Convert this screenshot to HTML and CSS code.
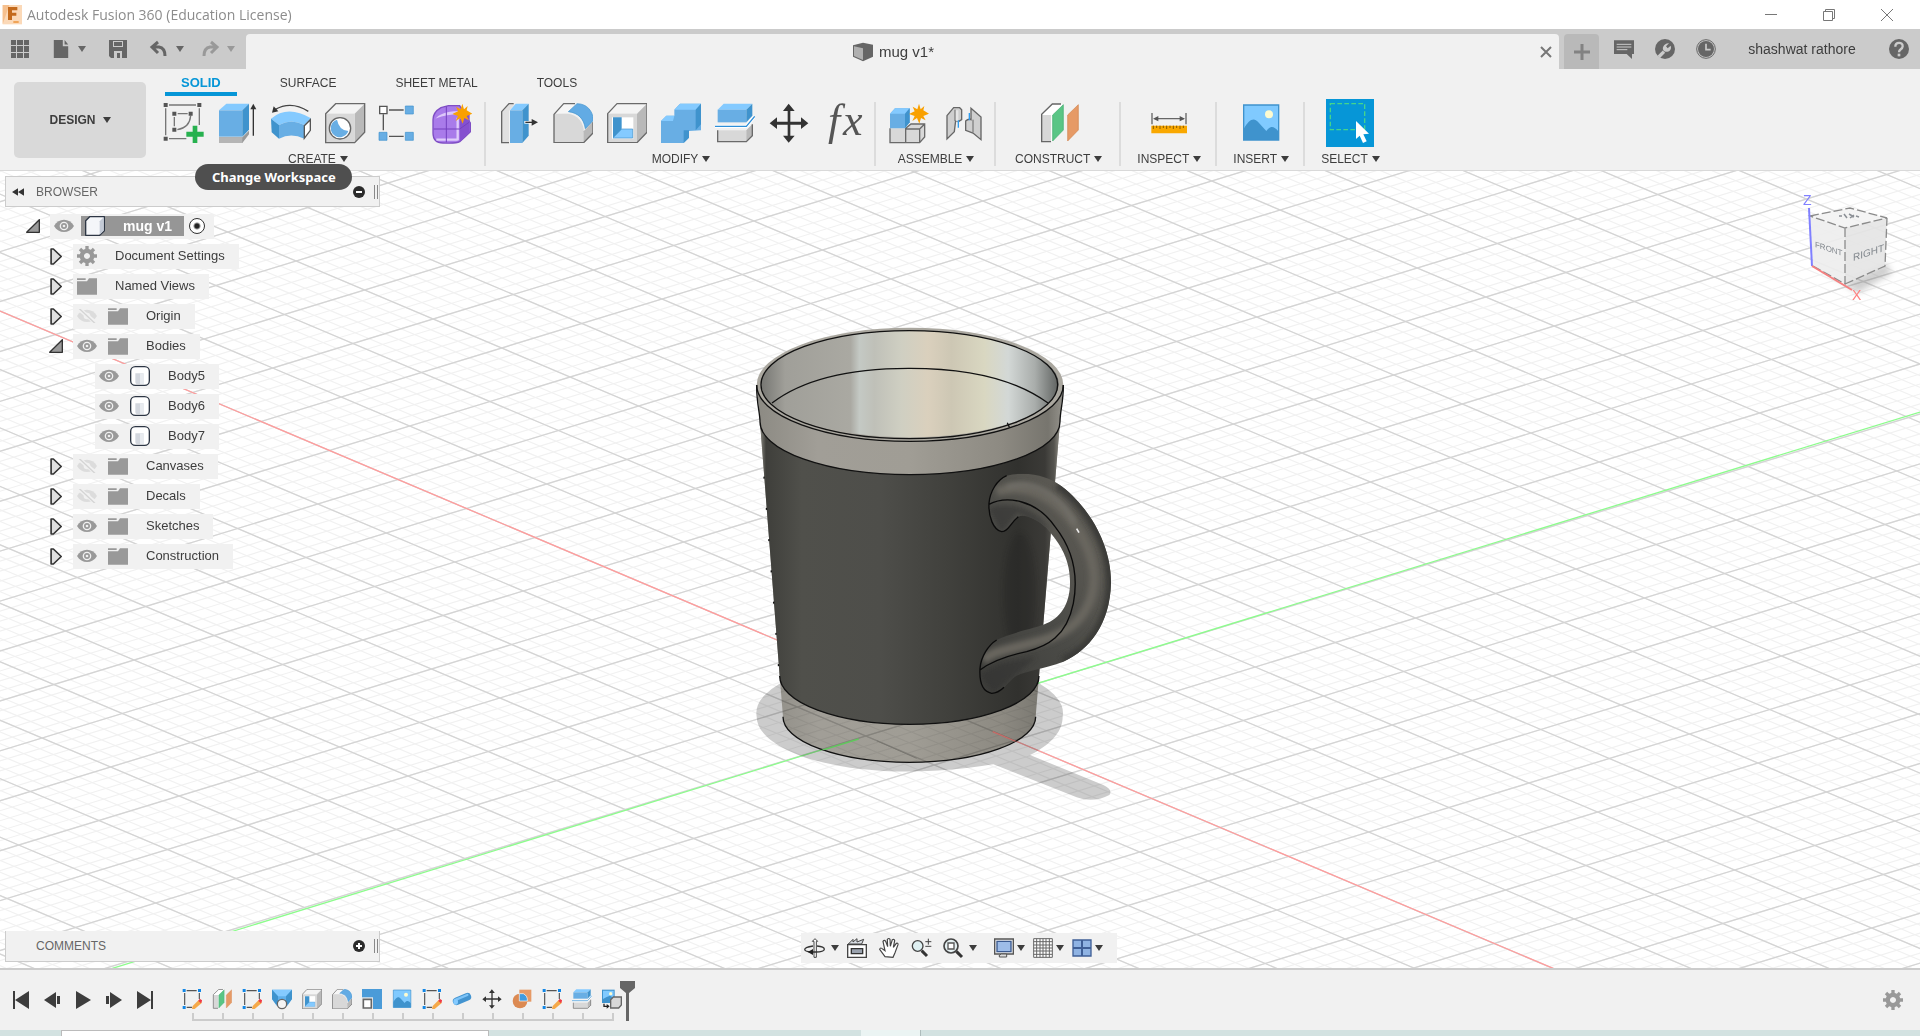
FILE: index.html
```html
<!DOCTYPE html>
<html lang="en">
<head>
<meta charset="utf-8">
<title>Autodesk Fusion 360 (Education License)</title>
<link rel="stylesheet" href="styles.css">
</head>
<body>
<svg class="defs" aria-hidden="true">
  <defs>
    <symbol id="plane" viewBox="0 0 120 120">
      <path d="M8 38 40 3 70 3 70 6 38 38V114H8z" fill="#fff"/><path d="M8 36h28v80H8z" fill="#d8d8d8"/>
      <path d="M36 116H8V34L40 3h26" fill="none" stroke="#666" stroke-width="4"/>
      <path d="M41 36 73 5V81L41 114z" fill="#5ac585" stroke="#3cae6c" stroke-width="2"/>
      <path d="M86 36 118 5V81L86 114z" fill="#e69a66" stroke="#d2834c" stroke-width="2"/>
    </symbol>
    <symbol id="shell" viewBox="0 0 120 120">
      <path d="M2 32 30 2h90L90 32z" fill="#f4f4f4"/><path d="M90 32 120 2V88L90 119z" fill="#b9b9b9"/><path d="M2 32h88v87H2z" fill="#d8d8d8"/>
      <path d="M2 32 30 2h90V88L90 119H2z" fill="none" stroke="#6a6a6a" stroke-width="4" stroke-linejoin="round"/>
      <path d="M15 43h64v64H15z" fill="#fff"/><path d="M18 43v62l26-24V43z" fill="#3f93cd"/><path d="M18 105 44 78h33v27z" fill="#84caff" stroke="#3f93cd" stroke-width="2"/>
    </symbol>
    <symbol id="fillet" viewBox="0 0 120 120">
      <path d="M3 34 32 2h34L46 30z" fill="#f6f6f6"/><path d="M3 32h42c30 4 46 26 48 54v33H3z" fill="#d8d8d8"/><path d="M92 85 120 55V90L92 119z" fill="#b9b9b9"/>
      <path d="M120 58V90L92 119H3V34L32 2h34" fill="none" stroke="#6a6a6a" stroke-width="4" stroke-linejoin="round"/>
      <path d="M46 26 72 2c28 0 48 20 49 50L97 77C92 46 76 30 46 26z" fill="#62abe4" stroke="#3f93cd" stroke-width="2"/>
    </symbol>
    <symbol id="split" viewBox="0 0 120 120">
      <path d="M8 20 26 2h86L94 20z" fill="#84caff"/><path d="M8 20h86v38H8z" fill="#68aee4"/><path d="M94 20 112 2V38L94 58z" fill="#3f93cd"/>
      <path d="M8 82h86v34H8z" fill="#d8d8d8"/><path d="M94 82 112 64V98L94 116z" fill="#b9b9b9"/><path d="M8 82V116H94L112 98V64" fill="none" stroke="#6a6a6a" stroke-width="4"/>
      <path d="M0 70H94L119 40" fill="none" stroke="#fff" stroke-width="10"/><path d="M0 70H94L119 40" fill="none" stroke="#2f8fd8" stroke-width="4"/>
    </symbol>
    <symbol id="picture" viewBox="0 0 120 120">
      <path d="M8 6h105v105H8z" fill="#80caff"/><path d="M8 78C26 46 40 42 54 60L76 84C88 68 98 68 113 86v25H8z" fill="#3f93cd"/>
      <circle cx="84" cy="34" r="12" fill="#fdfbd0"/><path d="M8 6h105v105H8z" fill="none" stroke="#3f93cd" stroke-width="4"/>
    </symbol>
    <symbol id="move" viewBox="0 0 120 120">
      <path d="M56 56V24H42L59 2 77 24H64V56H96V43L118 61 96 78V65H64V98H77L59 119 42 98H56V65H24V78L2 61 24 43V56z" fill="#333"/>
    </symbol>
    <symbol id="feat-sketch" viewBox="0 0 60 60">
      <path d="M8 12V48M14 5H44M52 12V30M14 55H30" stroke="#555" stroke-width="3.500" fill="none"/>
      <path d="M2 0H11V9H2zM48 0H57V9H48zM2 51H11V60H2z" fill="#1287e6"/>
      <path d="M50 33 60 41 38 60 30 60 32 51z" fill="#f5a94a"/><path d="M53 29 61 34 57 43 49 36z" fill="#ef3b48"/>
    </symbol>
    <symbol id="star" viewBox="0 0 60 60"><path d="M30 0 35 17 46 7 43 20 60 30 43 37 50 50 36 43 31 60 24 43 10 52 17 37 0 31 17 23 11 9 25 17z" fill="#f9a000"/></symbol>
    <symbol id="eye" viewBox="0 0 60 40"><path d="M0 20C14-5 46-5 60 20 46 44 14 44 0 20z" fill="#999"/><circle cx="30" cy="20" r="13" fill="#f1f1f1"/><circle cx="30" cy="20" r="9" fill="#999"/><circle cx="30" cy="20" r="4" fill="#eee"/></symbol>
    <symbol id="eye-off" viewBox="0 0 60 40"><path d="M0 20C14-5 46-5 60 20 46 44 14 44 0 20z" fill="#dcdcdc"/><circle cx="30" cy="20" r="10" fill="#f1f1f1"/><path d="M2-4 58 42" stroke="#f1f1f1" stroke-width="12"/><path d="M4-5 56 44" stroke="#d4d4d4" stroke-width="4"/></symbol>
    <symbol id="folder" viewBox="0 0 60 52"><path d="M0 3H26V8H0zM0 12H30L36 3H60V52H0z" fill="#999"/></symbol>
    <symbol id="gear" viewBox="0 0 60 60"><path d="M30 8a22 22 0 1 0 .1 0zM30 21a9 9 0 1 1-.1 0z" fill="#999" fill-rule="evenodd"/><path d="M30 0V13M30 47V60M0 30H13M47 30H60M9 9 18 18M42 42 51 51M51 9 42 18M18 42 9 51" stroke="#999" stroke-width="10"/></symbol>
    <symbol id="body" viewBox="0 0 60 60"><rect x="2" y="2" width="56" height="56" rx="14" fill="#fff" stroke="#2d3644" stroke-width="4"/><path d="M16 22H40V54H20q-4 0-4-6z" fill="#d3d7de"/><path d="M30 22H42V54H30z" fill="#e8ebef"/></symbol>
    <symbol id="closed" viewBox="0 0 36 52"><path d="M3 3H10L34 26 10 49H3z" fill="#e0e0e0" stroke="#333" stroke-width="5" stroke-linejoin="round"/></symbol>
    <symbol id="open" viewBox="0 0 42 42"><path d="M40 2V40H2z" fill="#9a9a9a" stroke="#333" stroke-width="4" stroke-linejoin="round"/></symbol>
    <symbol id="caret" viewBox="0 0 8 6"><path d="M0 0H8L4 6z" fill="currentColor"/></symbol>
    <linearGradient id="inner"><stop offset="0" stop-color="#777773"/><stop offset=".08" stop-color="#a09f99"/><stop offset=".3" stop-color="#aaa9a2"/><stop offset=".33" stop-color="#c4c9c4"/><stop offset=".38" stop-color="#bfc0b8"/><stop offset=".47" stop-color="#cfcfc2"/><stop offset=".56" stop-color="#dad0bd"/><stop offset=".64" stop-color="#cdc7b4"/><stop offset=".75" stop-color="#d9d7c1"/><stop offset=".83" stop-color="#d3d8d6"/><stop offset=".92" stop-color="#a9adab"/><stop offset="1" stop-color="#5f6260"/></linearGradient>
    <linearGradient id="steel"><stop offset="0" stop-color="#8c8a83"/><stop offset=".2" stop-color="#a19e97"/><stop offset=".5" stop-color="#a09d95"/><stop offset=".8" stop-color="#8d8a82"/><stop offset=".95" stop-color="#77756e"/><stop offset="1" stop-color="#95938c"/></linearGradient>
    <linearGradient id="dark"><stop offset="0" stop-color="#8b8a82"/><stop offset=".02" stop-color="#3f3f3b"/><stop offset=".14" stop-color="#50504b"/><stop offset=".4" stop-color="#4e4e4a"/><stop offset=".62" stop-color="#41413d"/><stop offset=".86" stop-color="#31312e"/><stop offset=".95" stop-color="#3b3a37"/><stop offset=".98" stop-color="#55544f"/><stop offset="1" stop-color="#908e86"/></linearGradient>
    <linearGradient id="grip" x1="0" x2="1" y1="1" y2="0"><stop offset="0" stop-color="#3c3c39"/><stop offset=".45" stop-color="#4b4b47"/><stop offset=".75" stop-color="#5b5953"/><stop offset="1" stop-color="#43433f"/></linearGradient>
    <clipPath id="base"><path d="M159 1220a379 137 0 0 0 758 0L927 1098A389 145 0 0 1 149 1098z"/></clipPath>
    <clipPath id="grip-clip"><path d="M830 497C900 480 960 505 985 522 1070 580 1145 700 1143 820 1140 940 1080 1020 1000 1055 940 1078 890 1080 855 1100 820 1130 815 1150 785 1150 755 1145 748 1110 750 1075 753 1040 775 1005 800 990 850 965 920 955 950 940 1000 920 1020 870 1020 820 1022 740 980 690 950 655 920 625 880 610 865 620 840 640 835 665 815 665 790 660 775 620 777 580 780 545 800 510 830 497z"/></clipPath>
    <filter id="soft" x="-20%" y="-20%" width="140%" height="140%"><feGaussianBlur stdDeviation="8"/></filter>
  </defs>
</svg>

<header class="titlebar">
  <svg class="app-logo" viewBox="0 0 60 60"><path d="M2 0H60V58H2z" fill="#fbd9b8"/><path d="M2 58 22 0H2z" fill="#f6c08e"/><path d="M18 6H46V16H30V23H43V32H30V45H18z" fill="#c46a1c"/><path d="M34 48H50V54H34z" fill="#f0a458"/></svg>
  <span class="app-title">Autodesk Fusion 360 (Education License)</span>
  <div class="window-buttons">
    <button aria-label="Minimize"><svg viewBox="0 0 12 12"><path d="M0 5.500H12" class="thin"/></svg></button>
    <button aria-label="Restore"><svg viewBox="0 0 12 12"><path d="M.5 2.500H9.500V11.500H.5zM2.500 2V.5H11.500V9.500H10" class="thin"/></svg></button>
    <button aria-label="Close"><svg viewBox="0 0 12 12"><path d="M0 0 12 12M12 0 0 12" class="thin"/></svg></button>
  </div>
</header>

<div class="tabbar">
  <div class="quick">
    <button aria-label="Data panel"><svg class="i18" viewBox="0 0 18 18"><path d="M0 0h5v5H0zM6 0h6v5H6zM13 0h5v5h-5zM0 6h5v6H0zM6 6h6v6H6zM13 6h5v6h-5zM0 13h5v5H0zM6 13h6v5H6zM13 13h5v5h-5z" fill="#666"/></svg></button>
    <button class="split-btn" aria-label="File"><svg class="i18" viewBox="0 0 18 20"><path d="M1 0H11V7H17V20H1zM13 0 17 5H13z" fill="#666"/></svg><svg class="caret"><use href="#caret"/></svg></button>
    <button aria-label="Save"><svg class="i18" viewBox="0 0 18 18"><path d="M0 0H18V18H2L0 16z" fill="#666"/><path d="M4 1H14V7H4zM5 11H13V18H5z" fill="#cbcbcb"/><path d="M5 2H13V6H5zM8 13H11V18H8z" fill="#666"/></svg></button>
    <button class="split-btn" aria-label="Undo"><svg class="i18" viewBox="0 0 18 18"><path d="M8 2 2 7 8 13M2 7H9Q15 8 15 16" fill="none" stroke="#666" stroke-width="3"/></svg><svg class="caret"><use href="#caret"/></svg></button>
    <button class="split-btn muted" aria-label="Redo"><svg class="i18" viewBox="0 0 18 18"><path d="M10 2 16 7 10 13M16 7H9Q3 8 3 16" fill="none" stroke="#999" stroke-width="3"/></svg><svg class="caret"><use href="#caret"/></svg></button>
  </div>
  <div class="doc-tab">
    <div class="doc-name"><svg class="i20" viewBox="0 0 60 56"><path d="M0 8 30 0 60 6V42L30 56 0 42z" fill="#666"/><path d="M3 11 30 17V52L3 40z" fill="#b0b0b0"/></svg><span>mug v1*</span></div>
    <button aria-label="Close document"><svg class="i10" viewBox="0 0 10 10"><path d="M0 0 10 10M10 0 0 10" stroke="#777" stroke-width="2"/></svg></button>
  </div>
  <button class="new-tab" aria-label="New tab"><svg class="i16" viewBox="0 0 16 16"><path d="M8 0V16M0 8H16" stroke="#828282" stroke-width="3"/></svg></button>
  <div class="account">
    <button aria-label="Comments"><svg class="i20" viewBox="0 0 60 60"><path d="M0 4H60V45H54V60L38 45H0z" fill="#666"/><path d="M8 16H52M8 24H52M8 32H40" stroke="#cbcbcb" stroke-width="3"/></svg></button>
    <button aria-label="Extensions"><svg class="i20" viewBox="0 0 60 60"><circle cx="30" cy="30" r="30" fill="#666"/><path d="M11 54 27 38" stroke="#cbcbcb" stroke-width="10"/><path d="M42 13 33 22 38 28 47 20C52 34 38 42 28 37 18 30 26 12 42 13z" fill="#cbcbcb"/></svg></button>
    <button aria-label="Job status"><svg class="i20" viewBox="0 0 60 60"><circle cx="30" cy="30" r="28" fill="none" stroke="#666" stroke-width="3"/><circle cx="30" cy="30" r="24" fill="#666"/><path d="M30 14V32H44" fill="none" stroke="#cbcbcb" stroke-width="5"/></svg></button>
    <button class="user">shashwat rathore</button>
    <button aria-label="Help"><svg class="i20" viewBox="0 0 60 60"><circle cx="30" cy="30" r="30" fill="#666"/><path d="M19 23C19 8 42 8 41 22 40 32 30 30 30 40" fill="none" stroke="#cbcbcb" stroke-width="7"/><path d="M26 44h8v8h-8z" fill="#cbcbcb"/></svg></button>
  </div>
</div>

<section class="ribbon">
  <button class="workspace">DESIGN <svg class="caret"><use href="#caret"/></svg></button>
  <div class="ribbon-main">
    <nav class="tabs">
      <button class="active">SOLID</button><button>SURFACE</button><button>SHEET METAL</button><button>TOOLS</button>
    </nav>
    <div class="groups">
      <div class="group">
        <div class="tools">
          <button aria-label="Create Sketch"><svg viewBox="0 0 120 120"><path d="M18 6H99M8 16V97M18 107H70M109 16V66M44 32H74M34 42V70M83 38Q80 74 43 80" fill="none" stroke="#777" stroke-width="4"/><path d="M2 0H14V12H2zM103 0H115V12H103zM2 101H14V113H2zM28 26H40V38H28zM77 26H89V38H77zM28 74H40V86H28z" fill="#555"/><path d="M89 68H103V86H122V101H103V120H89V101H70V86H89z" fill="#27b14f"/></svg></button>
          <button aria-label="Extrude"><svg viewBox="0 0 120 120"><path d="M6 103H76L96 83V94L76 120H6z" fill="#999"/><path d="M6 103H76V120H6z" fill="#b5b5b5"/><path d="M6 22 28 2H96L76 22z" fill="#84caff"/><path d="M6 22H76V101H6z" fill="#68aee4"/><path d="M76 22 96 2V80L76 101z" fill="#3f93cd"/><path d="M109 98V14" stroke="#333" stroke-width="4"/><path d="M100 19 109 2 118 19z" fill="#333"/></svg></button>
          <button aria-label="Revolve"><svg viewBox="0 0 120 120"><path d="M12 20Q60-8 112 25" fill="none" stroke="#444" stroke-width="4"/><path d="M3 29 8 10 22 25z" fill="#333"/><path d="M0 47Q50 5 120 46L100 66Q60 45 24 66z" fill="#84caff"/><path d="M0 47 24 66V107L2 88z" fill="#3f93cd"/><path d="M24 66Q60 45 100 66V107Q60 88 24 107z" fill="#68aee4"/><path d="M100 68 118 50V82L100 106z" fill="#fff" stroke="#555" stroke-width="4"/></svg></button>
          <button aria-label="Hole"><svg viewBox="0 0 120 120"><path d="M2 32 32 2H119L89 32z" fill="#f4f4f4"/><path d="M89 32 119 2V88L89 119z" fill="#b9b9b9"/><path d="M2 32H89V119H2z" fill="#d8d8d8"/><path d="M2 32 32 2H119V88L89 119H2z" fill="none" stroke="#6a6a6a" stroke-width="4"/><circle cx="45" cy="76" r="32" fill="#fff" stroke="#666" stroke-width="4"/><path d="M36 50A27 27 0 1 0 70 84Q42 82 36 50z" fill="#68aee4"/></svg></button>
          <button aria-label="Pattern"><svg viewBox="0 0 120 120"><path d="M30 21H74M13 34V82M30 100H74" stroke="#555" stroke-width="4"/><path d="M2 10H24V32H2z" fill="#fff" stroke="#555" stroke-width="4"/><path d="M79 9H103V33H79zM0 88H24V112H0zM79 88H103V112H79z" fill="#68aee4" stroke="#3f93cd" stroke-width="2"/></svg></button>
          <button aria-label="Create Form"><svg viewBox="0 0 120 120"><path d="M0 50Q0 28 24 14L46 8H80L112 60V86Q98 100 80 116 70 122 30 120 0 120 0 90z" fill="#a97bea" stroke="#7f4ec4" stroke-width="4"/><path d="M80 50 110 30V86L80 116z" fill="#8550cf"/><path d="M6 50Q20 26 76 24L80 34Q40 34 10 46z" fill="#ddc8fa"/><path d="M74 44V112M10 110H74" stroke="#e0cdfb" stroke-width="7"/><path d="M40 10V118M2 78H80L108 58" fill="none" stroke="#7440be" stroke-width="3"/><use href="#star" x="58" y="2" width="60" height="60"/></svg></button>
        </div>
        <button class="group-label">CREATE <svg class="caret"><use href="#caret"/></svg></button>
      </div>
      <div class="group">
        <div class="tools">
          <button aria-label="Press Pull"><svg viewBox="0 0 120 120"><path d="M8 24 30 2H48L30 24V119H8z" fill="#e0e0e0"/><path d="M30 119H8V26L30 2H44" fill="none" stroke="#666" stroke-width="4"/><path d="M33 22 50 2H89L70 22z" fill="#84caff"/><path d="M33 22H70V120H33z" fill="#68aee4"/><path d="M70 22 89 2V98L70 120z" fill="#3f93cd"/><path d="M76 58H104" stroke="#fff" stroke-width="8"/><path d="M79 58H102" stroke="#333" stroke-width="4"/><path d="M98 48 117 58 98 68z" fill="#333"/></svg></button>
          <button aria-label="Fillet"><svg><use href="#fillet"/></svg></button>
          <button aria-label="Shell"><svg><use href="#shell"/></svg></button>
          <button aria-label="Combine"><svg viewBox="0 0 120 120"><path d="M0 54 16 38H40V20L57 2H120V82L84 84V104L68 120H0z" fill="#68aee4"/><path d="M0 54 16 38H40L36 54zM40 20 57 2H120L104 20z" fill="#84caff"/><path d="M104 20 120 2V64L104 82H84V104L68 120V82H104z" fill="#3f93cd"/></svg></button>
          <button aria-label="Split Body"><svg><use href="#split"/></svg></button>
          <button aria-label="Move"><svg><use href="#move"/></svg></button>
          <button aria-label="Change Parameters"><svg viewBox="0 0 40 40"><text x="5" y="32" class="fx">f</text><text x="20" y="32" class="fx">x</text></svg></button>
        </div>
        <button class="group-label">MODIFY <svg class="caret"><use href="#caret"/></svg></button>
      </div>
      <div class="group">
        <div class="tools">
          <button aria-label="New Component"><svg viewBox="0 0 120 120"><path d="M3 76H50L66 62H107V102L92 119H3z" fill="#d8d8d8"/><path d="M3 76V119H92L107 102V63H66L50 76V119M50 78H92L107 63M92 78V119" fill="none" stroke="#6a6a6a" stroke-width="4"/><path d="M3 32 18 16H62V58L48 76H3z" fill="#68aee4"/><path d="M3 32 18 16H62L48 32z" fill="#84caff"/><path d="M48 32 62 16V58L48 76z" fill="#3f93cd"/><use href="#star" x="60" y="2" width="60" height="60"/></svg></button>
          <button aria-label="Joint"><svg viewBox="0 0 120 120"><path d="M12 38 32 14H50L56 20V50L46 56 38 52 34 86 12 108z" fill="#cfcfcf" stroke="#666" stroke-width="4"/><path d="M36 22V52L46 56V22z" fill="#e6e6e6"/><path d="M36 20V54" stroke="#666" stroke-width="3"/><path d="M46 52V74" stroke="#2f9df0" stroke-width="4"/><path d="M84 16 114 42V110L90 90 68 82V54Q76 46 84 50z" fill="#cfcfcf" stroke="#666" stroke-width="4"/><path d="M90 50V88" stroke="#666" stroke-width="3"/><path d="M79 30V52" stroke="#2f9df0" stroke-width="4"/></svg></button>
        </div>
        <button class="group-label">ASSEMBLE <svg class="caret"><use href="#caret"/></svg></button>
      </div>
      <div class="group construct">
        <div class="tools"><button aria-label="Offset Plane"><svg><use href="#plane"/></svg></button></div>
        <button class="group-label">CONSTRUCT <svg class="caret"><use href="#caret"/></svg></button>
      </div>
      <div class="group single">
        <div class="tools"><button aria-label="Measure"><svg viewBox="0 0 120 120"><path d="M9 30V64M111 30V64M18 47H104" stroke="#666" stroke-width="4"/><path d="M12 47 28 39V55zM108 47 92 39V55z" fill="#555"/><path d="M7 68H114V91H7z" fill="#f9a800"/><path d="M13 68v10M23 68v7M33 68v10M43 68v7M53 68v10M63 68v7M73 68v10M83 68v7M93 68v10M103 68v7" stroke="#8a5b00" stroke-width="3"/></svg></button></div>
        <button class="group-label">INSPECT <svg class="caret"><use href="#caret"/></svg></button>
      </div>
      <div class="group single">
        <div class="tools"><button aria-label="Insert Canvas"><svg><use href="#picture"/></svg></button></div>
        <button class="group-label">INSERT <svg class="caret"><use href="#caret"/></svg></button>
      </div>
      <div class="group single last">
        <div class="tools"><button class="select-tool" aria-label="Select"><svg viewBox="0 0 144 144"><path d="M13 14H116V92H13z" fill="none" stroke="#45d58c" stroke-width="4" stroke-dasharray="14 7"/><path d="M90 66V120L101 110 111 132 122 127 112 106 129 104z" fill="#fff"/></svg></button></div>
        <button class="group-label">SELECT <svg class="caret"><use href="#caret"/></svg></button>
      </div>
    </div>
  </div>
  <div class="tooltip" role="tooltip">Change Workspace</div>
</section>

<main class="stage">
  <svg class="scene" viewBox="0 171 1920 797" preserveAspectRatio="xMidYMid slice" role="img" aria-label="Mug model on the ground plane">
    <g id="ground" transform="matrix(68.5 29 80.2 -24.500 946 711.500)" fill="none">
      <path d="M0-30V30" stroke="#f1f1f1" stroke-width="60" stroke-dasharray=".022 .178" stroke-dashoffset=".011"/>
      <path d="M-30 0H30" stroke="#f1f1f1" stroke-width="60" stroke-dasharray=".024 .176" stroke-dashoffset=".012"/>
      <path d="M0-30V30" stroke="#d4d4d4" stroke-width="60" stroke-dasharray=".024 .976" stroke-dashoffset=".012"/>
      <path d="M-30 0H30" stroke="#d4d4d4" stroke-width="60" stroke-dasharray=".028 .972" stroke-dashoffset=".014"/>
    </g>
    <path d="M0 311 946 711.500 1920 1123.500" fill="none" stroke="#ff9c9c" stroke-width="1.300"/>
    <path d="M0 1003 946 711.500 1920 412" fill="none" stroke="#8dfc8d" stroke-width="1.300"/>
    <g transform="translate(730 310) scale(.33333)">
      <g fill="#000" fill-opacity=".2"><path d="M80 1220a460 166 0 1 1 918 0C998 1260 970 1300 900 1335L1120 1425Q1150 1440 1138 1455 1090 1480 1040 1462L790 1363C380 1430 80 1330 80 1220z"/></g>
      <path d="M80 225 90 335 149 1098 159 1220a379 137 0 0 0 758 0L927 1098 990 335 1000 225z" fill="url(#steel)"/>
      <path d="M90 335a450 159 0 0 0 900 0L927 1098a389 145 0 0 1-778 0z" fill="url(#dark)"/>
      <ellipse cx="540" cy="225" rx="460" ry="172" fill="#aaa79f"/>
      <ellipse cx="540" cy="222" rx="446" ry="160" fill="url(#inner)"/>
      <g fill="none" stroke="#111" stroke-width="4">
        <ellipse cx="538" cy="224" rx="445" ry="162"/>
        <path d="M80 225a460 169 0 0 0 920 0"/>
        <path d="M126 279Q260 176 535 175T954 279M832 338 838 352"/>
        <path d="M80 225C79 275 90 310 90 335a450 159 0 0 0 900 0C990 305 1001 270 1000 225M149 1098a389 145 0 0 0 778 0M159 1220a379 137 0 0 0 758 0"/>
        <path d="M102 500 148 1100" stroke-dasharray="6 88"/>
      </g>
      <g clip-path="url(#base)" class="base-grid"><use href="#ground" transform="scale(3) translate(-730 -310)"/></g>
      <ellipse cx="870" cy="850" rx="50" ry="180" fill="#1e1e1c" opacity=".25" filter="url(#soft)"/>
      <g clip-path="url(#grip-clip)">
        <path d="M730 470H1160V1170H730z" fill="url(#grip)"/>
        <path d="M800 545C920 505 1020 600 1070 710S1085 950 940 990 800 1020 760 1050" fill="none" stroke="#69665f" stroke-width="28" filter="url(#soft)"/>
        <path d="M830 530C920 500 1000 570 1035 640" fill="none" stroke="#77756e" stroke-width="10" filter="url(#soft)"/>
        <path d="M985 522C1070 580 1145 700 1143 820 1140 940 1080 1020 1000 1055" fill="none" stroke="#3a3a37" stroke-width="32" filter="url(#soft)"/>
        <path d="M775 595C830 570 920 590 960 660L860 610 815 670zM750 1095C790 1060 850 1050 920 1040L850 1100 790 1150z" fill="#2f2f2d" opacity=".5" filter="url(#soft)"/>
      </g>
      <path d="M1040 656 1047 668" stroke="#eee" stroke-width="5"/>
      <path d="M830 497C800 510 780 545 777 580 775 620 790 660 815 665 835 665 840 640 865 620M800 990C775 1005 753 1040 750 1075 748 1110 755 1145 785 1150 800 1150 812 1142 822 1132M777 583C830 555 920 570 975 650 1030 720 1045 800 1030 880 1010 980 950 1010 890 1025 840 1035 790 1050 750 1080" fill="none" stroke="#0b0b0b" stroke-width="4"/>
      <g clip-path="url(#base)" fill="none"><path d="M788 1265 1200 1439" stroke="#c96a66" stroke-width="4"/><path d="M386 1287 0 1405" stroke="#5fc95c" stroke-width="4"/><path d="M440 1292 560 1345" stroke="#77756f" stroke-width="3"/></g>
    </g>
  </svg>

  <aside class="browser">
    <div class="panel-head">
      <button aria-label="Collapse browser"><svg class="rewind" viewBox="0 0 36 22"><path d="M0 11 18 0V22zM18 11 36 0V22z" fill="#333"/></svg></button>
      <h2>BROWSER</h2>
      <button aria-label="Remove"><svg class="i12" viewBox="0 0 12 12"><circle cx="6" cy="6" r="6" fill="#2b2b2b"/><path d="M3 6H9" stroke="#fff" stroke-width="2"/></svg></button>
      <span class="grabber"></span>
    </div>
    <ul class="tree">
      <li class="root"><button class="twist" aria-label="Collapse"><svg class="tri"><use href="#open"/></svg></button><div class="node"><svg class="eye"><use href="#eye"/></svg><span class="chip"><svg class="i20" viewBox="0 0 60 60"><path d="M2 14 14 2H58V44L44 58H2z" fill="#f4f6f9" stroke="#2d3644" stroke-width="4" stroke-linejoin="round"/><path d="M44 16 56 4V44L44 56z" fill="#c3cad6"/></svg>mug v1</span><input type="radio" aria-label="Activate mug v1" checked></div></li>
      <li class="l1"><button class="twist" aria-label="Expand"><svg class="arr"><use href="#closed"/></svg></button><div class="node"><svg class="i20"><use href="#gear"/></svg><span>Document Settings</span></div></li>
      <li class="l1"><button class="twist" aria-label="Expand"><svg class="arr"><use href="#closed"/></svg></button><div class="node"><svg class="i20"><use href="#folder"/></svg><span>Named Views</span></div></li>
      <li class="l1"><button class="twist" aria-label="Expand"><svg class="arr"><use href="#closed"/></svg></button><div class="node"><svg class="eye"><use href="#eye-off"/></svg><svg class="i20"><use href="#folder"/></svg><span>Origin</span></div></li>
      <li class="l1"><button class="twist" aria-label="Collapse"><svg class="tri"><use href="#open"/></svg></button><div class="node"><svg class="eye"><use href="#eye"/></svg><svg class="i20"><use href="#folder"/></svg><span>Bodies</span></div></li>
      <li class="l2"><div class="node"><svg class="eye"><use href="#eye"/></svg><svg class="i20"><use href="#body"/></svg><span>Body5</span></div></li>
      <li class="l2"><div class="node"><svg class="eye"><use href="#eye"/></svg><svg class="i20"><use href="#body"/></svg><span>Body6</span></div></li>
      <li class="l2"><div class="node"><svg class="eye"><use href="#eye"/></svg><svg class="i20"><use href="#body"/></svg><span>Body7</span></div></li>
      <li class="l1"><button class="twist" aria-label="Expand"><svg class="arr"><use href="#closed"/></svg></button><div class="node"><svg class="eye"><use href="#eye-off"/></svg><svg class="i20"><use href="#folder"/></svg><span>Canvases</span></div></li>
      <li class="l1"><button class="twist" aria-label="Expand"><svg class="arr"><use href="#closed"/></svg></button><div class="node"><svg class="eye"><use href="#eye-off"/></svg><svg class="i20"><use href="#folder"/></svg><span>Decals</span></div></li>
      <li class="l1"><button class="twist" aria-label="Expand"><svg class="arr"><use href="#closed"/></svg></button><div class="node"><svg class="eye"><use href="#eye"/></svg><svg class="i20"><use href="#folder"/></svg><span>Sketches</span></div></li>
      <li class="l1"><button class="twist" aria-label="Expand"><svg class="arr"><use href="#closed"/></svg></button><div class="node"><svg class="eye"><use href="#eye"/></svg><svg class="i20"><use href="#folder"/></svg><span>Construction</span></div></li>
    </ul>
  </aside>

  <svg class="viewcube" viewBox="0 0 94 118">
    <path d="M14 76 46 94 86 74 92 84 58 104z" fill="#777" opacity=".35" class="cube-shadow"/>
    <path d="M10 27 50 19 87 29 45 39z" fill="#f3f3f3" fill-opacity=".9"/><path d="M10 27 45 39V95L13 77z" fill="#ededed" fill-opacity=".9"/><path d="M45 39 87 29 85 77 45 95z" fill="#e4e4e4" fill-opacity=".9"/>
    <path d="M10 27 50 19 87 29 45 39zM45 39V95L13 77M45 95 85 77 87 29" fill="none" stroke="#8b8b8b" stroke-width="1.300" stroke-dasharray="9 3"/>
    <path d="M39 27h3M44 25l3 4M49 25l5 3M50 29l4-3M56 27l3 1" stroke="#8b8f95" stroke-width="1.500"/>
    <text class="face small" transform="translate(15 58) skewY(18)">FRONT</text>
    <text class="face" transform="translate(53 72) skewY(-18)">RIGHT</text>
    <path d="M9 19 12 77" stroke="#8080ff" stroke-width="2"/><path d="M12 77 52 101" stroke="#f58080" stroke-width="2"/>
    <text x="3" y="16" class="axis z">Z</text><text x="52" y="111" class="axis x">X</text>
  </svg>

  <div class="comments panel-head">
    <h2>COMMENTS</h2>
    <button aria-label="Add comment"><svg class="i12" viewBox="0 0 12 12"><circle cx="6" cy="6" r="6" fill="#2b2b2b"/><path d="M3 6H9M6 3V9" stroke="#fff" stroke-width="2"/></svg></button>
    <span class="grabber"></span>
  </div>

  <div class="navbar">
    <button class="wide" aria-label="Orbit"><svg class="i20" viewBox="0 0 60 60"><path d="M30 2 38 10H34V58H27V10H22z" fill="#fff" stroke="#444" stroke-width="3"/><path d="M24 24C-12 30-4 40 18 42M36 24C66 26 66 42 32 42H14" fill="none" stroke="#333" stroke-width="4"/><path d="M8 42 24 33V51z" fill="#222"/></svg><svg class="caret"><use href="#caret"/></svg></button>
    <button aria-label="Look at"><svg class="i20" viewBox="0 0 60 60"><path d="M4 18 18 4V12L30 2V12L50 4 44 18z" fill="#d8dde3" stroke="#444" stroke-width="3"/><path d="M2 20H58V58H2z" fill="#fff" stroke="#444" stroke-width="4"/><path d="M13 32H47V47H13z" fill="#9aa2ae" stroke="#333" stroke-width="4"/></svg></button>
    <button aria-label="Pan"><svg class="i20" viewBox="0 0 60 60"><path d="M18 56 2 34Q4 26 12 34L18 38 12 10Q16 4 20 10L26 26 25 4Q30-1 33 4L34 25 40 5Q46 2 47 8L43 28 52 16Q58 14 57 20L48 44 42 58z" fill="#fff" stroke="#444" stroke-width="3.500"/></svg></button>
    <button aria-label="Zoom"><svg class="i20" viewBox="0 0 60 60"><circle cx="20" cy="24" r="16" fill="#dff0f2" stroke="#444" stroke-width="4"/><path d="M32 38 48 54" stroke="#333" stroke-width="9"/><path d="M52 2V20M43 11H61M43 25H61" stroke="#444" stroke-width="3"/></svg></button>
    <button class="wide fit" aria-label="Fit"><svg class="i20" viewBox="0 0 60 60"><circle cx="24" cy="24" r="21" fill="#e5f0f2" stroke="#444" stroke-width="5"/><path d="M15 15H33V33H15z" fill="#fff" stroke="#555" stroke-width="4"/><path d="M40 40 57 57" stroke="#333" stroke-width="9"/></svg><svg class="caret"><use href="#caret"/></svg></button>
    <button class="tight first" aria-label="Display settings"><svg class="i20" viewBox="0 0 60 60"><path d="M2 3H58V48H2z" fill="#eee" stroke="#555" stroke-width="4"/><path d="M9 10H51V41H9z" fill="#9dbce8" stroke="#3b5a90" stroke-width="4"/><path d="M22 48H38V57H16V51z" fill="#ddd" stroke="#555" stroke-width="3"/></svg><svg class="caret"><use href="#caret"/></svg></button>
    <button class="tight" aria-label="Grid and snaps"><svg class="i20" viewBox="0 0 60 60"><path d="M2 2H58V58H2zM11 2V58M21 2V58M30 2V58M39 2V58M49 2V58M2 11H58M2 21H58M2 30H58M2 39H58M2 49H58" fill="#fff" stroke="#666" stroke-width="3"/></svg><svg class="caret"><use href="#caret"/></svg></button>
    <button class="tight" aria-label="Viewports"><svg class="i20" viewBox="0 0 60 60"><path d="M3 6H29V29H3zM31 6H57V29H31zM3 31H29V54H3zM31 31H57V54H31z" fill="#8fb3e3" stroke="#3f5f96" stroke-width="4"/></svg><svg class="caret"><use href="#caret"/></svg></button>
  </div>
</main>

<section class="timeline">
  <div class="playback">
    <button aria-label="Go to start"><svg viewBox="0 0 16 18"><path d="M0 0H2V18H0zM2 9 16 0V18z"/></svg></button>
    <button aria-label="Step back"><svg viewBox="0 0 16 18"><path d="M0 9 12 1V17zM13 5H16V13H13z"/></svg></button>
    <button aria-label="Play"><svg viewBox="0 0 16 18"><path d="M1 0 16 9 1 18z"/></svg></button>
    <button aria-label="Step forward"><svg viewBox="0 0 16 18"><path d="M0 5H3V13H0zM4 1 16 9 4 17z"/></svg></button>
    <button aria-label="Go to end"><svg viewBox="0 0 16 18"><path d="M0 0 14 9 0 18zM14 0H16V18H14z"/></svg></button>
  </div>
  <ol class="features">
    <li><button aria-label="Sketch1"><svg><use href="#feat-sketch"/></svg></button></li>
    <li><button aria-label="Plane1"><svg><use href="#plane"/></svg></button></li>
    <li><button aria-label="Sketch2"><svg><use href="#feat-sketch"/></svg></button></li>
    <li><button aria-label="Loft1"><svg viewBox="0 0 60 60"><path d="M0 2H60V30L46 50H14L0 30z" fill="#5fb0ec"/><path d="M0 2H60L42 22H18z" fill="#84caff"/><path d="M0 2 18 22V46H12L0 30zM60 2 42 22V46H48L60 30z" fill="#3f93cd"/><circle cx="30" cy="45" r="14" fill="#f4f4f4" stroke="#666" stroke-width="4"/></svg></button></li>
    <li><button aria-label="Shell1"><svg><use href="#shell"/></svg></button></li>
    <li><button aria-label="Fillet1"><svg><use href="#fillet"/></svg></button></li>
    <li><button aria-label="Scale1"><svg viewBox="0 0 60 60"><path d="M0 0H60V60H0z" fill="#4a9bd8"/><path d="M0 25H33V60H0z" fill="#f1f1f1"/><path d="M4 31H28V57H4z" fill="#fff" stroke="#666" stroke-width="5"/></svg></button></li>
    <li><button aria-label="Canvas1"><svg><use href="#picture"/></svg></button></li>
    <li><button aria-label="Sketch3"><svg><use href="#feat-sketch"/></svg></button></li>
    <li><button aria-label="Pipe1"><svg viewBox="0 0 60 60"><path d="M14 37 46 23" stroke="#4394d0" stroke-width="23" stroke-linecap="round"/><path d="M14 31 46 18" stroke="#7cc3f8" stroke-width="7" stroke-linecap="round"/><ellipse cx="11" cy="38" rx="7" ry="9" fill="#84caff"/></svg></button></li>
    <li><button aria-label="Move1"><svg><use href="#move"/></svg></button></li>
    <li><button aria-label="Combine1"><svg viewBox="0 0 60 60"><path d="M22 2H58V38H22z" fill="#e69a66"/><circle cx="24" cy="36" r="22" fill="#dc8a52"/><path d="M22 14H34A22 22 0 0 1 46 36H22z" fill="#3f9be0" stroke="#fff" stroke-width="2"/></svg></button></li>
    <li><button aria-label="Sketch4"><svg><use href="#feat-sketch"/></svg></button></li>
    <li><button aria-label="Split1"><svg><use href="#split"/></svg></button></li>
    <li><button aria-label="Thicken1"><svg viewBox="0 0 60 60"><path d="M0 2H38V42H0z" fill="#3f93cd"/><path d="M3 5H35V26L24 20 14 24 3 30z" fill="#80caff"/><circle cx="26" cy="14" r="5" fill="#fdfbd0"/><path d="M26 32 34 24H58V48L50 57H26z" fill="#d8d8d8" stroke="#666" stroke-width="4"/><path d="M6 44V52H16" fill="none" stroke="#222" stroke-width="4"/><path d="M14 45 23 52 14 59z" fill="#222"/></svg></button></li>
  </ol>
  <svg class="marker" viewBox="0 0 15 40"><path d="M0 0H15V7L9 12V40H6V12L0 7z" fill="#666"/></svg>
  <button class="settings" aria-label="Timeline settings"><svg class="i20"><use href="#gear"/></svg></button>
</section>
<footer class="desktop"><span class="s1"></span><span class="s2"></span><span class="s3"></span><span class="s4"></span></footer>
</body>
</html>
```

FILE: styles.css
```css
* { box-sizing: border-box; }
body {
  margin: 0;
  min-height: 100vh;
  display: flex;
  flex-direction: column;
  font: 12px/16px "Liberation Sans", Arial, sans-serif;
  color: #3d3d3d;
  background: #f1f1f1;
}
button {
  display: flex;
  align-items: center;
  justify-content: center;
  padding: 0;
  border: 0;
  background: none;
  font: inherit;
  color: inherit;
}
svg { display: block; flex: none; overflow: visible; }
h2 { margin: 0; font: inherit; flex: 1; color: #666; }
ul, ol { margin: 0; padding: 0; list-style: none; }
.defs { position: absolute; width: 0; height: 0; }
.i10 { width: 10px; height: 10px; }
.i12 { width: 12px; height: 12px; }
.i16 { width: 16px; height: 16px; }
.i18 { width: 18px; height: 18px; }
.i20 { width: 20px; height: 20px; }
.caret { width: 8px; height: 6px; color: #3d3d3d; }

/* Window title */
.titlebar { display: flex; align-items: center; height: 29px; background: #fff; }
.app-logo { width: 20px; height: 20px; margin-left: 2px; }
.app-title { flex: 1; padding-left: 5px; font: 14px/20px "Open Sans", "Noto Sans", sans-serif; color: #8c8c8c; }
.window-buttons { display: flex; margin-right: 4px; }
.window-buttons button { width: 58px; height: 28px; }
.window-buttons svg { width: 12px; height: 12px; }
.thin { fill: none; stroke: #777; stroke-width: 1; }

/* Document tabs */
.tabbar { display: flex; align-items: flex-end; height: 40px; background: #cbcbcb; }
.quick { width: 246px; height: 40px; display: flex; align-items: center; gap: 23px; padding-left: 11px; }
.quick .caret { color: #666; }
.quick .muted .caret { color: #999; }
.split-btn { gap: 8px; }
.quick .split-btn + .split-btn { margin-left: -6px; }
.doc-tab { flex: 1; height: 35px; display: flex; align-items: center; padding-right: 8px; background: #f1f1f1; border-radius: 4px 4px 0 0; }
.doc-name { flex: 1; display: flex; align-items: center; justify-content: center; gap: 6px; font-size: 15px; }
.new-tab { width: 35px; height: 35px; margin-left: 5px; background: #b9b9b9; border-radius: 4px 4px 0 0; }
.account { display: flex; align-items: center; height: 40px; gap: 21px; padding: 0 11px 0 15px; }
.user { width: 112px; margin: 0 10px 0 9px; font-size: 14px; }

/* Ribbon */
.ribbon { position: relative; display: flex; height: 102px; border-bottom: 1px solid #d9d9d9; background: #f1f1f1; }
.workspace { width: 132px; height: 76px; margin: 13px 0 0 14px; gap: 7px; background: #d9d9d9; border-radius: 5px; font-weight: bold; }
.ribbon-main { flex: 1; }
.tabs { display: flex; gap: 27px; padding-left: 19px; height: 28px; }
.tabs button { height: 27px; padding: 4px 16px 0; border-bottom: 4px solid transparent; }
.tabs .active { font-weight: bold; font-size: 13px; color: #0696d7; border-color: #0696d7; }
.groups { display: flex; }
.group { position: relative; display: flex; flex-direction: column; align-items: center; padding: 0 13px; }
.group:first-child { padding-left: 17px; }
.group::after { content: ""; position: absolute; right: 0; top: 5px; width: 2px; height: 64px; background: #dcdcdc; }
.group.construct { padding: 0 19px; }
.group.single { padding: 0 16px; }
.group.last::after { display: none; }
.tools { display: flex; align-items: center; gap: 14px; height: 52px; }
.tools svg { width: 40px; height: 40px; }
.tools .select-tool { width: 48px; height: 48px; background: #0696d7; }
.tools .select-tool svg { width: 48px; height: 48px; }
.fx { font: italic 44px "Liberation Serif", serif; fill: #555; }
.group-label { gap: 4px; height: 18px; padding-top: 2px; }
.tooltip { position: absolute; z-index: 2; left: 195px; top: 95px; padding: 0 16px 0 17px; font: bold 13px/26px "Noto Sans", sans-serif; color: #fff; background: #4f4f4f; border-radius: 13px; }

/* Modelling stage */
.stage { position: relative; flex: 1; min-height: 560px; overflow: hidden; background: #fff; }
.scene { position: absolute; inset: 0; width: 100%; height: 100%; }
.base-grid { mix-blend-mode: multiply; }
.browser { position: relative; width: 380px; padding: 5px 0 0 5px; }
.panel-head { display: flex; align-items: center; height: 31px; padding: 0 1px 0 6px; background: #f1f1f1; border: 1px solid #ccc; }
.panel-head h2 { padding-left: 12px; }
.rewind { width: 12px; height: 8px; }
.grabber { width: 4px; height: 14px; margin-left: 9px; border: solid #888; border-width: 0 1px; }
.comments { position: absolute; left: 5px; bottom: 6px; width: 375px; border-top: 0; }
.comments h2 { padding-left: 24px; }

.tree { font-size: 13px; padding-top: 4px; }
.tree li { display: flex; align-items: center; height: 30px; }
.twist { width: 18px; margin-right: 8px; }
.tri { width: 14px; height: 14px; }
.arr { width: 12px; height: 17px; }
.root { padding-left: 19px; }
.l1 { padding-left: 42px; }
.l2 { padding-left: 90px; }
.node { display: flex; align-items: center; height: 25px; padding: 0 14px 0 4px; background: #f1f1f1; }
.eye { width: 20px; height: 14px; }
.node .eye + .i20 { margin-left: 11px; }
.node > span { padding-left: 18px; }
.node > .chip { display: flex; align-items: center; gap: 18px; width: 103px; height: 20px; margin: 0 5px 0 7px; padding-left: 4px; color: #fff; background: #969696; font-weight: bold; font-size: 14px; }
.node input { appearance: none; width: 16px; height: 16px; margin: 0; border: 1px solid #333; border-radius: 50%; background: radial-gradient(circle, #222 2px, #fff 4px); }
.root .node { padding-right: 9px; }

.viewcube { position: absolute; right: 26px; top: 18px; width: 94px; height: 118px; }
.cube-shadow { filter: blur(3px); }
.face { font: 10px "Liberation Sans", sans-serif; fill: #80868c; }
.face.small { font-size: 8px; }
.axis { font: 14px "Liberation Sans", sans-serif; }
.axis.z { fill: #8080ff; }
.axis.x { fill: #ff8080; }

.navbar { position: absolute; left: 50%; bottom: 5px; width: 316px; height: 30px; margin-left: -159px; padding-left: 4px; display: flex; align-items: center; gap: 12px; background: #f1f1f1; }
.navbar .wide { gap: 6px; margin-right: -4px; }
.navbar .tight { gap: 3px; margin-right: -4px; }
.navbar .first { margin-left: 9px; }

/* Timeline */
.timeline { display: flex; height: 62px; border-top: 2px solid #ccc; background: #f1f1f1; padding: 0 17px 0 13px; }
.playback { display: flex; gap: 15px; padding-top: 21px; height: 39px; }
.playback svg { width: 16px; height: 18px; fill: #3d3d3d; }
.features { display: flex; margin-left: 29px; padding-top: 19px; }
.features li { width: 30px; height: 32px; position: relative; border-bottom: 2px solid #ccc; }
.features li:last-child { width: 12px; }
.features svg { width: 20px; height: 20px; }
.features li::before { content: ""; position: absolute; left: 10px; bottom: 0; width: 2px; height: 6px; background: #ccc; }
.features li:first-child::after { content: ""; position: absolute; left: 0; bottom: -2px; width: 10px; height: 2px; background: #f1f1f1; }
.marker { width: 15px; height: 40px; margin: 11px 0 0 6px; }
.settings { margin: 20px 0 0 auto; height: 20px; }

.desktop { display: flex; height: 6px; background: #d3e2e1; }
.s1 { width: 61px; }
.s2 { width: 428px; background: #fff; border: 1px solid #bbb; border-bottom: 0; }
.s3 { width: 372px; }
.s4 { width: 60px; background: #ebf4f3; border-right: 1px solid #aebcbc; }
```
